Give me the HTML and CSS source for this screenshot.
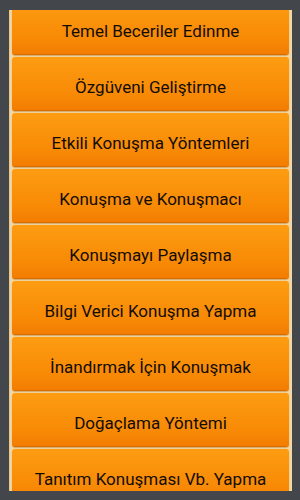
FILE: index.html
```html
<!DOCTYPE html>
<html lang="tr">
	<head>
		<meta charset="UTF-8">
		<title>Konuşma</title>
		<link rel="stylesheet" href="styles.css">
	</head>
	<body>
		<div class="frame">
			<div class="panel">
				<div class="list">
					<div class="item">Temel Beceriler Edinme</div>
					<div class="item">Özgüveni Geliştirme</div>
					<div class="item">Etkili Konuşma Yöntemleri</div>
					<div class="item">Konuşma ve Konuşmacı</div>
					<div class="item">Konuşmayı Paylaşma</div>
					<div class="item">Bilgi Verici Konuşma Yapma</div>
					<div class="item">İnandırmak İçin Konuşmak</div>
					<div class="item">Doğaçlama Yöntemi</div>
					<div class="item">Tanıtım Konuşması Vb. Yapma</div>
				</div>
			</div>
		</div>
	</body>
</html>
```

FILE: styles.css
```css
* {
    margin: 0;
    padding: 0;
    box-sizing: border-box;
}
body {
    background-color: #43474b;
    font-family: Roboto, "Noto Sans", sans-serif;
}
.frame {
    width: 300px;
    height: 500px;
    padding: 10px 8px 9px 9px;
}
.panel {
    height: 481px;
    overflow: hidden;
    background-color: #f2d7a2;
    border-left: 1px solid #e8c98a;
    padding: 0 3px 0 2px;
}
.list {
    margin-top: -9px;
}
.item {
    height: 54px;
    margin-bottom: 2px;
    border-radius: 3px;
    background: linear-gradient(#fd9c12, #f88a06 70%, #f37d02);
    border-bottom: 1px solid #d96c00;
    box-shadow: 0 1px 1px rgba(150, 90, 20, 0.35);
    color: #120c05;
    font-size: 17px;
    text-align: center;
    line-height: 60px;
}
```
